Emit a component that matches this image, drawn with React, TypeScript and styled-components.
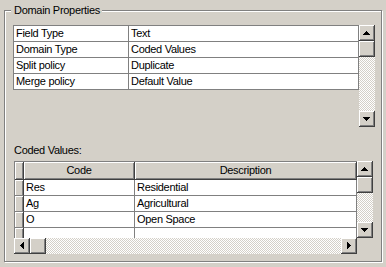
import React from "react";
import styled, { createGlobalStyle, css } from "styled-components";

const FACE = "#d4d0c8";
const SHADOW = "#808080";
const DARK = "#404040";

const Global = createGlobalStyle`
  html, body { margin: 0; padding: 0; background: ${FACE}; }
  body {
    font-family: "Liberation Sans", Arial, sans-serif;
    font-size: 11px;
    color: #000;
  }
  #root { width: 386px; height: 267px; overflow: hidden; }
`;

const Page = styled.div`
  width: 386px;
  height: 267px;
  box-sizing: border-box;
  padding: 10px 0 0 4px;
  background: ${FACE};
  letter-spacing: -0.3px;
`;

const GroupBox = styled.section`
  position: relative;
  width: 378px;
  height: 252px;
  box-sizing: border-box;
  border: 1px solid ${SHADOW};
  box-shadow: inset 1px 1px 0 #fff, 1px 1px 0 #fff;
  padding: 14px 0 7px 8px;
  display: flex;
  flex-direction: column;
`;

const Legend = styled.span`
  position: absolute;
  top: -7px;
  left: 6px;
  padding: 0 2px 0 3px;
  line-height: 13px;
  background: ${FACE};
  white-space: nowrap;
`;

const PropsPane = styled.div`
  display: flex;
  align-items: flex-start;
  height: 102px;
`;

const PropTable = styled.div`
  width: 346px;
  box-sizing: border-box;
  border-top: 1px solid ${SHADOW};
  border-left: 1px solid ${SHADOW};
  background: #fff;
`;

const PropRow = styled.div`
  display: grid;
  grid-template-columns: 115px 230px;
`;

const PropCell = styled.div`
  height: 16px;
  box-sizing: border-box;
  border-right: 1px solid ${SHADOW};
  border-bottom: 1px solid ${SHADOW};
  padding: 0 1px 0 2px;
  line-height: 15px;
  white-space: nowrap;
  overflow: hidden;
`;

const SectionLabel = styled.div`
  margin-top: 17px;
  padding-left: 1px;
  line-height: 13px;
  height: 13px;
`;

const DataGrid = styled.div`
  margin: 4px 0 0 1px;
  display: grid;
  grid-template-columns: 343px 16px;
  grid-template-rows: 77px 16px;
  width: 359px;
`;

const TableArea = styled.div`
  box-sizing: border-box;
  border-top: 1px solid ${SHADOW};
  border-left: 1px solid ${SHADOW};
  background: #fff;
  overflow: hidden;
`;

const COLS = "9px 111px 222px";

const HeaderRow = styled.div`
  display: grid;
  grid-template-columns: ${COLS};
  height: 18px;
`;

const raised = css`
  background: ${FACE};
  box-sizing: border-box;
  border-right: 1px solid ${DARK};
  border-bottom: 1px solid ${DARK};
  box-shadow: inset 1px 1px 0 #fff, inset -1px -1px 0 ${SHADOW};
`;

const HeaderCell = styled.div`
  ${raised};
  height: 18px;
  line-height: 17px;
  text-align: center;
  white-space: nowrap;
  overflow: hidden;
`;

const DataRow = styled.div`
  display: grid;
  grid-template-columns: ${COLS};
  height: 16px;
`;

const RowHeader = styled.div`
  background: ${FACE};
  box-sizing: border-box;
  border-right: 1px solid ${DARK};
  border-bottom: 1px solid ${SHADOW};
  box-shadow: inset 1px 1px 0 #fff, inset -1px 0 0 ${SHADOW};
`;

const DataCell = styled.div`
  height: 16px;
  box-sizing: border-box;
  border-right: 1px solid ${SHADOW};
  border-bottom: 1px solid ${SHADOW};
  padding-left: 2px;
  line-height: 15px;
  white-space: nowrap;
  overflow: hidden;
`;

const Bar = styled.div<{ $vertical: boolean; $length: number }>`
  display: flex;
  flex-direction: ${(p) => (p.$vertical ? "column" : "row")};
  width: ${(p) => (p.$vertical ? 16 : p.$length)}px;
  height: ${(p) => (p.$vertical ? p.$length : 16)}px;
  flex: none;
`;

const Track = styled.div`
  flex: 1;
  background-color: ${FACE};
  background-image: repeating-conic-gradient(#fff 0 25%, ${FACE} 0 50%);
  background-size: 2px 2px;
`;

const BarButton = styled.div`
  ${raised};
  width: 16px;
  height: 16px;
  flex: none;
  display: grid;
  place-items: center;
  svg { display: block; }
`;

const Corner = styled.div`
  background: ${FACE};
`;

type Dir = "up" | "down" | "left" | "right";

const ARROWS: Record<Dir, { w: number; h: number; d: string }> = {
  up: { w: 7, h: 4, d: "M3 0h1v1H3zM2 1h3v1H2zM1 2h5v1H1zM0 3h7v1H0z" },
  down: { w: 7, h: 4, d: "M0 0h7v1H0zM1 1h5v1H1zM2 2h3v1H2zM3 3h1v1H3z" },
  left: { w: 4, h: 7, d: "M3 0h1v7H3zM2 1h1v5H2zM1 2h1v3H1zM0 3h1v1H0z" },
  right: { w: 4, h: 7, d: "M0 0h1v7H0zM1 1h1v5H1zM2 2h1v3H2zM3 3h1v1H3z" },
};

const Arrow = ({ dir }: { dir: Dir }) => {
  const a = ARROWS[dir];
  return (
    <svg width={a.w} height={a.h} viewBox={`0 0 ${a.w} ${a.h}`} shapeRendering="crispEdges">
      <path d={a.d} fill="#000" />
    </svg>
  );
};

const ScrollBar = ({ vertical, length }: { vertical: boolean; length: number }) => (
  <Bar $vertical={vertical} $length={length}>
    <BarButton>
      <Arrow dir={vertical ? "up" : "left"} />
    </BarButton>
    <BarButton />
    <Track />
    <BarButton>
      <Arrow dir={vertical ? "down" : "right"} />
    </BarButton>
  </Bar>
);

const properties: [string, string][] = [
  ["Field Type", "Text"],
  ["Domain Type", "Coded Values"],
  ["Split policy", "Duplicate"],
  ["Merge policy", "Default Value"],
];

const codedValues: [string, string][] = [
  ["Res", "Residential"],
  ["Ag", "Agricultural"],
  ["O", "Open Space"],
  ["", ""],
];

export default function App() {
  return (
    <>
      <Global />
      <Page>
        <GroupBox>
          <Legend>Domain Properties</Legend>
          <PropsPane>
            <PropTable>
              {properties.map(([k, v]) => (
                <PropRow key={k}>
                  <PropCell>{k}</PropCell>
                  <PropCell>{v}</PropCell>
                </PropRow>
              ))}
            </PropTable>
            <ScrollBar vertical length={102} />
          </PropsPane>
          <SectionLabel>Coded Values:</SectionLabel>
          <DataGrid>
            <TableArea>
              <HeaderRow>
                <HeaderCell />
                <HeaderCell>Code</HeaderCell>
                <HeaderCell>Description</HeaderCell>
              </HeaderRow>
              {codedValues.map(([c, d], i) => (
                <DataRow key={i}>
                  <RowHeader />
                  <DataCell>{c}</DataCell>
                  <DataCell>{d}</DataCell>
                </DataRow>
              ))}
            </TableArea>
            <ScrollBar vertical length={77} />
            <ScrollBar vertical={false} length={343} />
            <Corner />
          </DataGrid>
        </GroupBox>
      </Page>
    </>
  );
}
